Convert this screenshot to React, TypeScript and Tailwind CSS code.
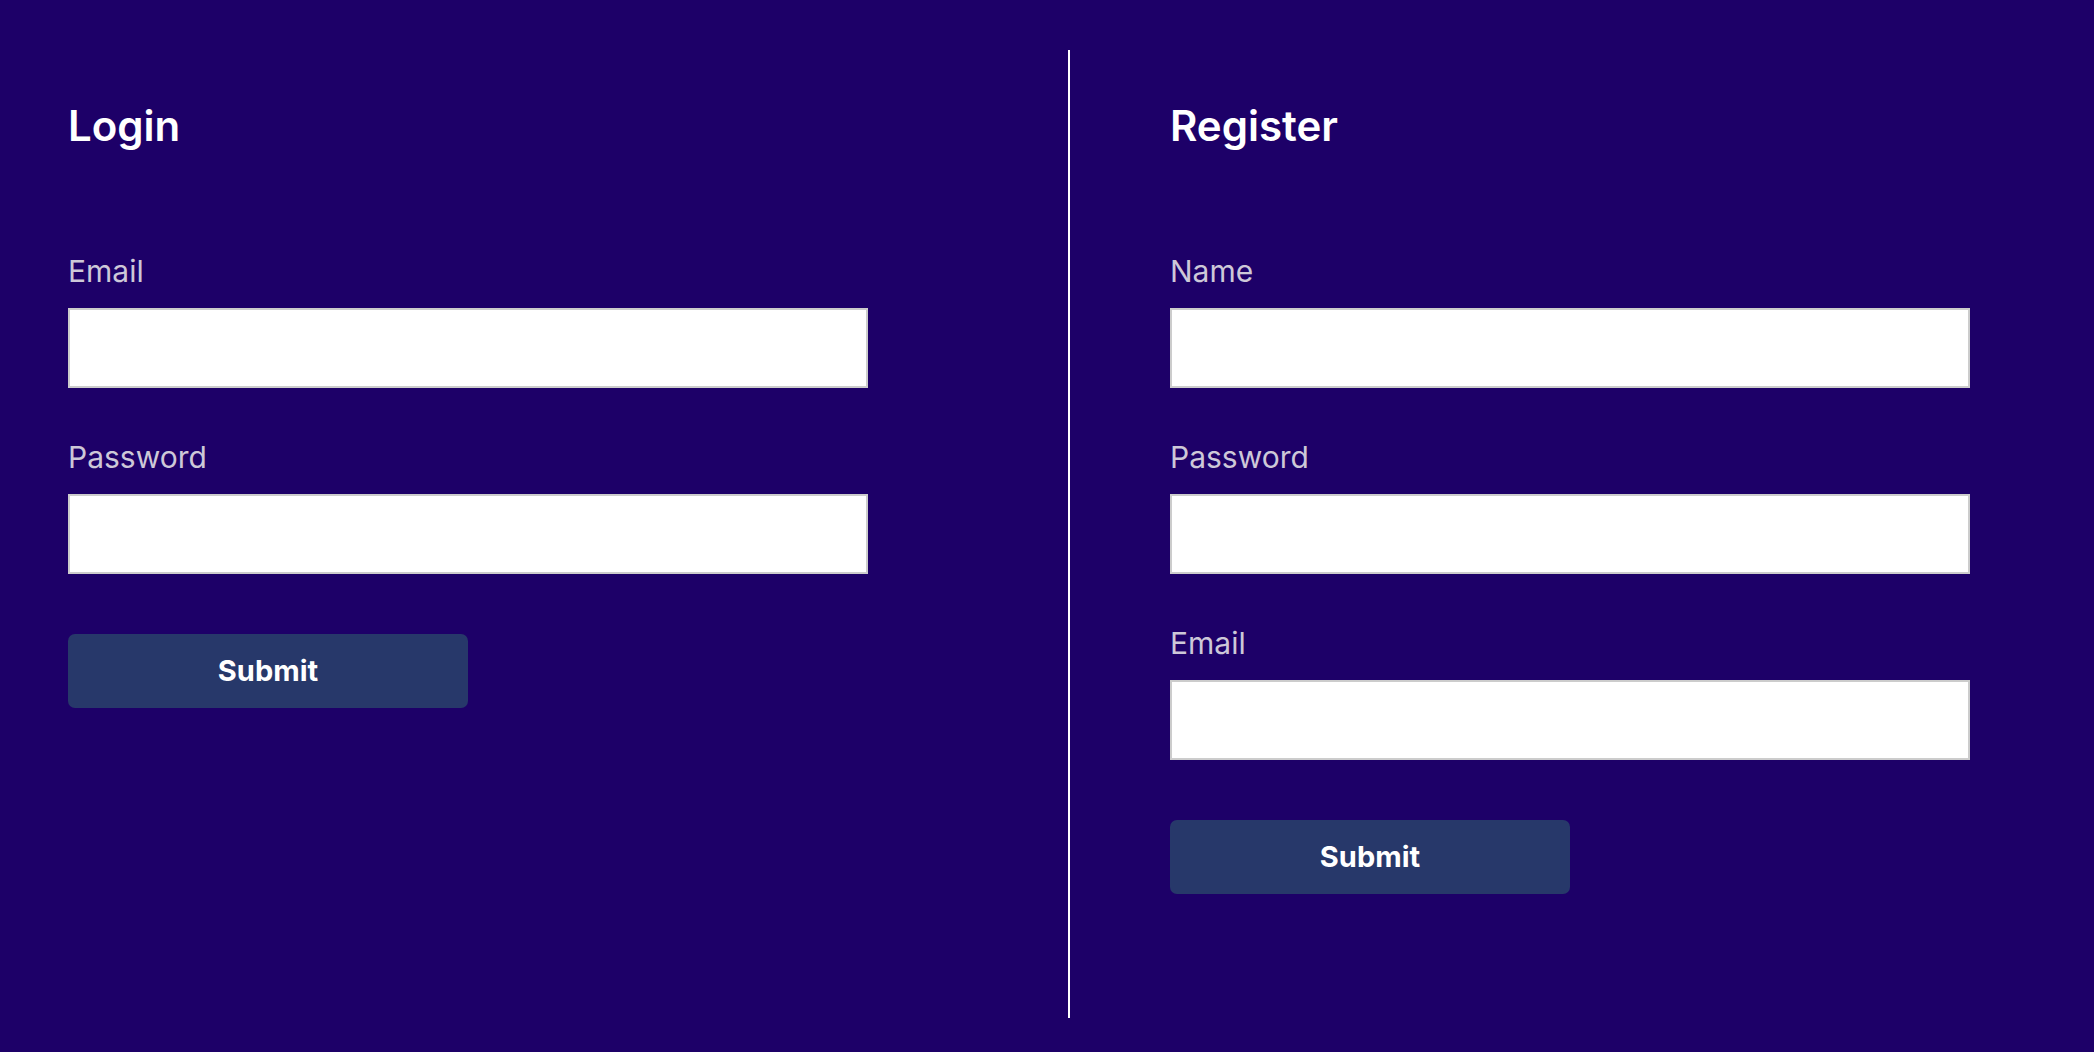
import React from "react";

function Field({ label, first }: { label: string; first?: boolean }) {
  return (
    <div className={first ? "mt-[101px]" : "mt-[51px]"}>
      <label className="block text-[30px] leading-[36px] text-[#cdc8d8]">{label}</label>
      <input
        type="text"
        className="mt-[19px] block h-[80px] w-[800px] border-2 border-[#cccccc] bg-white outline-none"
      />
    </div>
  );
}

function SubmitButton() {
  return (
    <button className="mt-[60px] flex h-[74px] w-[400px] items-center justify-center rounded-[7px] bg-[#27386a] text-[29px] font-bold text-white">
      Submit
    </button>
  );
}

export default function App() {
  return (
    <div
      className="h-[1052px] w-full overflow-hidden bg-[#1d0068]"
      style={{ fontFamily: "Inter, 'Noto Sans', sans-serif" }}
    >
      <div className="mt-[50px] flex h-[968px]">
        <div className="w-[1070px] shrink-0 border-r-2 border-white pl-[68px] pt-[49px]">
          <h1 className="text-[42px] font-semibold leading-[53px] text-white">Login</h1>
          <Field label="Email" first />
          <Field label="Password" />
          <SubmitButton />
        </div>
        <div className="pl-[100px] pt-[49px]">
          <h1 className="text-[42px] font-semibold leading-[53px] text-white">Register</h1>
          <Field label="Name" first />
          <Field label="Password" />
          <Field label="Email" />
          <SubmitButton />
        </div>
      </div>
    </div>
  );
}
